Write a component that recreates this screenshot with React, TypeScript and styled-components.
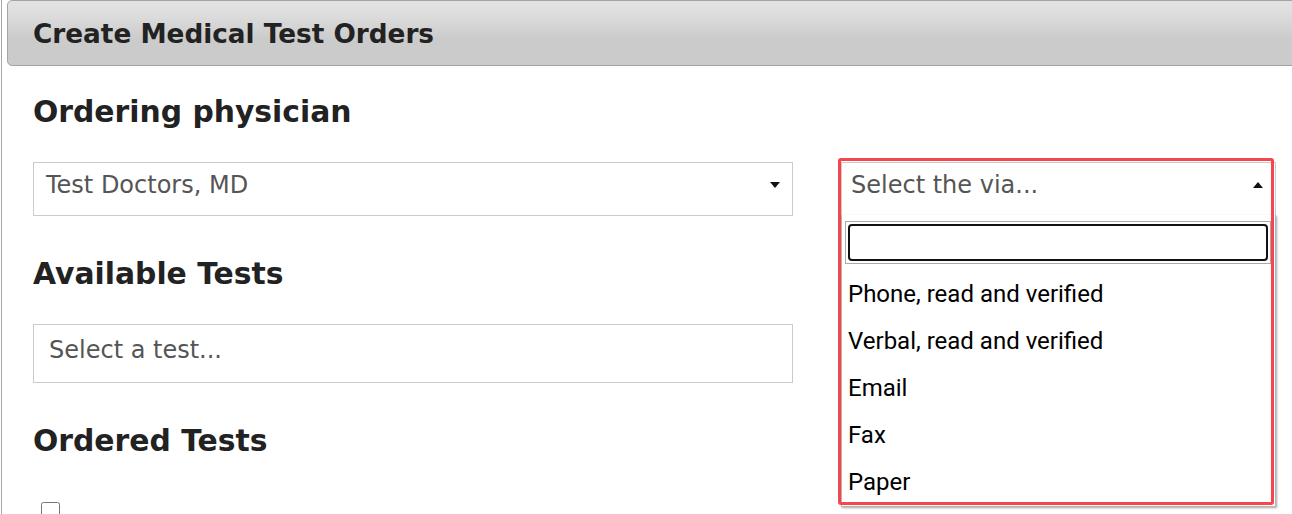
import React from 'react';
import styled, { createGlobalStyle } from 'styled-components';

const GlobalStyle = createGlobalStyle`
  html, body {
    margin: 0;
    padding: 0;
    background: #fff;
    overflow: hidden;
  }
  * {
    box-sizing: border-box;
  }
`;

const Page = styled.div`
  margin-left: 1px;
  min-height: 514px;
  border-left: 1px solid #a6a6a6;
  font-family: 'DejaVu Sans', Verdana, sans-serif;
  color: #222;
`;

const PanelHeader = styled.div`
  margin-left: 5px;
  margin-right: -12px;
  height: 66px;
  display: flex;
  align-items: center;
  padding-left: 25px;
  padding-top: 2px;
  border: 1px solid #a4a4a4;
  border-radius: 5px 0 0 5px;
  background: linear-gradient(#e2e2e2 0%, #e0e0e0 14%, #cbcbcb 60%, #cbcbcb 100%);
`;

const PanelTitle = styled.h1`
  margin: 0;
  font-size: 26.3px;
  font-weight: bold;
  color: #222;
`;

const PanelBody = styled.div`
  padding-left: 31px;
`;

const SectionTitle = styled.h2<{ $top: number }>`
  margin: ${(p) => p.$top}px 0 0;
  font-size: 29.8px;
  line-height: 34px;
  font-weight: bold;
  color: #222;
`;

const SelectRow = styled.div`
  display: flex;
  gap: 48px;
  margin-top: 33px;
`;

const SelectBox = styled.div<{ $width: number; $height: number; $padTop: number; $padLeft: number }>`
  position: relative;
  width: ${(p) => p.$width}px;
  height: ${(p) => p.$height}px;
  padding: ${(p) => p.$padTop}px 30px 0 ${(p) => p.$padLeft}px;
  border: 1px solid #cbcbcb;
  background: #fff;
  font-size: 24px;
  line-height: 28px;
  color: #555;
  white-space: nowrap;
`;

const Caret = styled.span<{ $up?: boolean }>`
  position: absolute;
  right: 12px;
  top: 19px;
  width: 0;
  height: 0;
  border-left: 5px solid transparent;
  border-right: 5px solid transparent;
  ${(p) => (p.$up ? 'border-bottom: 6px solid #111;' : 'border-top: 6px solid #111;')}
`;

const ViaField = styled.div`
  position: relative;
  width: 435px;
`;

const Dropdown = styled.div`
  position: absolute;
  top: 53px;
  left: 0;
  right: 0;
  border: 1px solid #b4b4b4;
  border-top: none;
  background: #fff;
  box-shadow: 1px 1px 2px rgba(0, 0, 0, 0.35);
  z-index: 2;
`;

const SearchWrap = styled.div`
  padding: 6px 4px 7px 3px;
`;

const SearchBox = styled.div`
  height: 43px;
  padding: 2px;
  border: 1px solid #aaa;
`;

const SearchInput = styled.input`
  display: block;
  width: 100%;
  height: 100%;
  border: 2px solid #111;
  border-radius: 4px;
  outline: none;
  font-size: 20px;
`;

const OptionList = styled.ul`
  list-style: none;
  margin: 0;
  padding: 0;
`;

const OptionItem = styled.li`
  height: 47px;
  padding-left: 6px;
  font-family: Roboto, 'Liberation Sans', Arial, sans-serif;
  font-size: 24px;
  line-height: 47px;
  color: #000;
`;

const Highlight = styled.div`
  position: absolute;
  top: -4px;
  left: -3px;
  width: 436px;
  height: 347px;
  border: 3px solid #f5474b;
  border-radius: 3px;
  pointer-events: none;
  z-index: 3;
`;

const TestCheck = styled.input`
  margin: 44px 0 0 8px;
  width: 19px;
  height: 19px;
`;

const viaOptions = [
  'Phone, read and verified',
  'Verbal, read and verified',
  'Email',
  'Fax',
  'Paper',
];

const App: React.FC = () => {
  return (
    <>
      <GlobalStyle />
      <Page>
        <PanelHeader>
          <PanelTitle>Create Medical Test Orders</PanelTitle>
        </PanelHeader>
        <PanelBody>
          <SectionTitle $top={29}>Ordering physician</SectionTitle>
          <SelectRow>
            <SelectBox $width={760} $height={54} $padTop={8} $padLeft={12}>
              Test Doctors, MD
              <Caret />
            </SelectBox>
            <ViaField>
              <SelectBox $width={435} $height={54} $padTop={8} $padLeft={9}>
                Select the via...
                <Caret $up />
              </SelectBox>
              <Dropdown>
                <SearchWrap>
                  <SearchBox>
                    <SearchInput type="text" />
                  </SearchBox>
                </SearchWrap>
                <OptionList>
                  {viaOptions.map((o) => (
                    <OptionItem key={o}>{o}</OptionItem>
                  ))}
                </OptionList>
              </Dropdown>
              <Highlight />
            </ViaField>
          </SelectRow>

          <SectionTitle $top={41}>Available Tests</SectionTitle>
          <SelectRow>
            <SelectBox $width={760} $height={59} $padTop={11} $padLeft={15}>
              Select a test...
            </SelectBox>
          </SelectRow>

          <SectionTitle $top={41}>Ordered Tests</SectionTitle>
          <TestCheck type="checkbox" />
        </PanelBody>
      </Page>
    </>
  );
};

export default App;
